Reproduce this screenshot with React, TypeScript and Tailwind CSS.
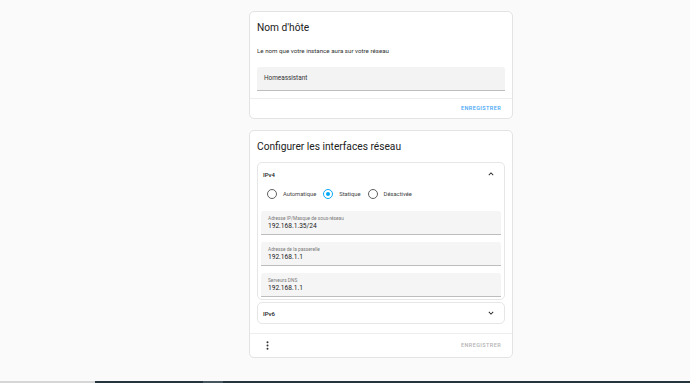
import React from 'react';

function Chevron({ up }: { up?: boolean }) {
  return (
    <svg width="10" height="10" viewBox="0 0 24 24" className="text-[#212121]">
      {up ? (
        <path d="M7.41 15.41 12 10.83l4.59 4.58L18 14l-6-6-6 6z" fill="currentColor" />
      ) : (
        <path d="M7.41 8.59 12 13.17l4.59-4.58L18 10l-6 6-6-6z" fill="currentColor" />
      )}
    </svg>
  );
}

function Radio({ label, checked }: { label: string; checked?: boolean }) {
  return (
    <div className="flex items-center">
      <div className="w-[18px] h-[18px] flex items-center justify-center">
        <div
          className={`w-[10px] h-[10px] rounded-full border-[1.5px] flex items-center justify-center ${
            checked ? 'border-[#03a9f4]' : 'border-[#5f5f5f]'
          }`}
        >
          {checked && <div className="w-[4px] h-[4px] rounded-full bg-[#03a9f4]" />}
        </div>
      </div>
      <span className="ml-[2px] text-[5.8px] text-[#444]">{label}</span>
    </div>
  );
}

function Field({ label, value }: { label: string; value: string }) {
  return (
    <div className="h-[24px] bg-[#f5f5f5] border-b border-[#bdbdbd] rounded-t-[3px] px-[7px] pt-[5px]">
      <div className="text-[4.8px] leading-[6px] text-[#7a7a7a]">{label}</div>
      <div className="text-[6.6px] leading-[9px] text-[#212121]">{value}</div>
    </div>
  );
}

export default function App() {
  return (
    <div
      className="w-[690px] h-[383px] bg-[#fafafa] flex flex-col overflow-hidden"
      style={{ fontFamily: 'Roboto, "Noto Sans", sans-serif' }}
    >
      <div className="flex-1 pl-[249px] pt-[11px]">
        {/* Hostname card */}
        <div className="w-[264px] bg-white border border-[#e3e3e3] rounded-[5px]">
          <div className="px-[7px] pt-[8px] text-[10.2px] leading-[16px] text-[#212121]">
            Nom d'hôte
          </div>
          <div className="px-[7px] mt-[10px] text-[6.2px] leading-[10px] text-[#333]">
            Le nom que votre instance aura sur votre réseau
          </div>
          <div className="mx-[7px] mt-[11px] h-[24px] bg-[#f3f3f3] border-b border-[#bdbdbd] rounded-t-[3px] flex items-center px-[7px]">
            <span className="text-[6.4px] text-[#333]">Homeassistant</span>
          </div>
          <div className="mt-[7px] border-t border-[#eeeeee] h-[20px] flex items-center justify-end pr-[11px]">
            <span className="text-[5.5px] font-medium tracking-[0.4px] text-[#42a5f5]">
              ENREGISTRER
            </span>
          </div>
        </div>

        {/* Network card */}
        <div className="mt-[11px] w-[264px] bg-white border border-[#e3e3e3] rounded-[5px]">
          <div className="px-[7px] pt-[8px] text-[10.2px] leading-[16px] text-[#212121]">
            Configurer les interfaces réseau
          </div>

          <div className="mx-[7px] mt-[7px] h-[138px] border border-[#e6e6e6] rounded-[5px] overflow-hidden">
            <div className="h-[22px] flex items-center justify-between pl-[5px] pr-[8px]">
              <span className="text-[6px] font-medium text-[#212121]">IPv4</span>
              <Chevron up />
            </div>
            <div className="h-[18px] flex items-center gap-[3px] pl-[5px]">
              <Radio label="Automatique" />
              <Radio label="Statique" checked />
              <Radio label="Désactivée" />
            </div>
            <div className="mx-[3px] mt-[8px] flex flex-col gap-[7px]">
              <Field label="Adresse IP/Masque de sous-réseau" value="192.168.1.35/24" />
              <Field label="Adresse de la passerelle" value="192.168.1.1" />
              <Field label="Serveurs DNS" value="192.168.1.1" />
            </div>
          </div>

          <div className="mx-[7px] mt-[2px] h-[22px] border border-[#e6e6e6] rounded-[5px] flex items-center justify-between pl-[5px] pr-[8px]">
            <span className="text-[6px] font-medium text-[#212121]">IPv6</span>
            <Chevron />
          </div>

          <div className="mt-[9px] border-t border-[#eeeeee] h-[24px] flex items-center justify-between pl-[16px] pr-[11px]">
            <svg width="3" height="9" viewBox="0 0 3 9">
              <circle cx="1.5" cy="1.2" r="1" fill="#333" />
              <circle cx="1.5" cy="4.5" r="1" fill="#333" />
              <circle cx="1.5" cy="7.8" r="1" fill="#333" />
            </svg>
            <span className="text-[5.5px] font-medium tracking-[0.4px] text-[#b4b4b4]">
              ENREGISTRER
            </span>
          </div>
        </div>
      </div>

      {/* Bottom strip */}
      <div className="h-[2px] flex">
        <div className="w-[95px] bg-[#d6d6d6]" />
        <div className="w-[108px] bg-[#26343d]" />
        <div className="w-[20px] bg-[#46555e]" />
        <div className="flex-1 bg-[#26343d]" />
      </div>
    </div>
  );
}
